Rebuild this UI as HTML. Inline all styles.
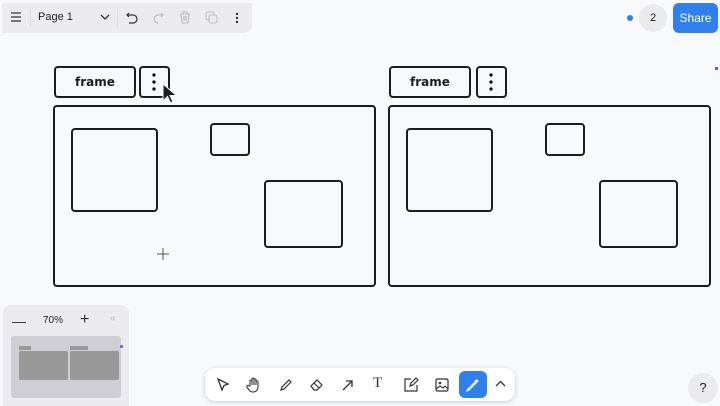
<!DOCTYPE html>
<html><head><style>
body{margin:0;width:720px;height:406px;background:#f8f9fb;font-family:"Liberation Sans",sans-serif;position:relative;overflow:hidden}
.abs{position:absolute}
.b{position:absolute;border:2px solid #1d1d1d;border-radius:4px;box-sizing:border-box}
.lbl{font-family:"Comic Sans MS","DejaVu Sans",sans-serif;font-size:12px;font-weight:bold;display:flex;align-items:center;justify-content:center;color:#1d1d1d}
.ic{position:absolute;top:376px;width:18px;height:18px}
</style></head><body>
<div class="abs" style="left:2px;top:3px;width:250px;height:30px;background:#ececef;border-radius:0 0 8px 0"></div>
<svg class="abs" style="left:10px;top:12px" width="12" height="10"><path d="M1 1h10M1 5h10M1 9h10" stroke="#333" stroke-width="1.3"/></svg>
<div class="abs" style="left:30px;top:9px;width:1px;height:18px;background:#ddd"></div>
<div class="abs" style="left:38px;top:11px;font-size:11px;color:#222">Page 1</div>
<svg class="abs" style="left:100px;top:14px" width="10" height="7"><path d="M1 1l4 4 4-4" stroke="#333" fill="none" stroke-width="1.3"/></svg>
<div class="abs" style="left:117px;top:9px;width:1px;height:18px;background:#ddd"></div>
<svg class="abs" style="left:126px;top:12px" width="12" height="12"><path d="M3 1L1 3l2 2M1 3h6a4 4 0 010 8H3" stroke="#333" fill="none" stroke-width="1.2"/></svg>
<svg class="abs" style="left:152px;top:12px" width="12" height="12"><path d="M9 1l2 2-2 2M11 3H6a4 4 0 000 8" stroke="#bbb" fill="none" stroke-width="1.2"/></svg>
<svg class="abs" style="left:179px;top:11px" width="12" height="13"><path d="M1 3h10M4 3V1h4v2M2 3l1 9h6l1-9M5 5v5M7 5v5" stroke="#bbb" fill="none" stroke-width="1.1"/></svg>
<svg class="abs" style="left:205px;top:11px" width="13" height="13"><rect x="1" y="1" width="8" height="8" rx="2" stroke="#bbb" fill="none"/><rect x="4" y="4" width="8" height="8" rx="2" stroke="#bbb" fill="#ececef"/></svg>
<svg class="abs" style="left:235px;top:12px" width="4" height="12"><circle cx="2" cy="2" r="1.2" fill="#333"/><circle cx="2" cy="6" r="1.2" fill="#333"/><circle cx="2" cy="10" r="1.2" fill="#333"/></svg>

<div class="abs" style="left:627px;top:15px;width:6px;height:6px;border-radius:50%;background:#2f80ed"></div>
<div class="abs" style="left:639px;top:4px;width:28px;height:28px;border-radius:50%;background:#ebebee;font-size:11px;text-align:center;line-height:28px;color:#222">2</div>
<div class="abs" style="left:673px;top:3px;width:45px;height:30px;border-radius:6px;background:#2f80ed;color:#fff;font-size:12px;text-align:center;line-height:30px">Share</div>
<div class="abs" style="left:715px;top:67px;width:3px;height:3px;background:#5a5ae8"></div>

<div class="b lbl" style="left:54px;top:66px;width:82px;height:32px">frame</div>
<div class="b" style="left:139px;top:66px;width:31px;height:32px"></div>
<svg class="abs" style="left:152px;top:72px" width="4" height="20"><circle cx="2" cy="3" r="1.6"/><circle cx="2" cy="10" r="1.6"/><circle cx="2" cy="17" r="1.6"/></svg>
<svg class="abs" style="left:161px;top:83px" width="16" height="22"><path d="M2 1v17l4.5-4.5 3 6.5 2.5-1.2-3-6.3h6.5z" fill="#1d1d1d" stroke="#fff" stroke-width="1"/></svg>
<div class="b" style="left:53px;top:105px;width:323px;height:182px"></div>
<div class="b" style="left:71px;top:128px;width:87px;height:84px"></div>
<div class="b" style="left:210px;top:123px;width:40px;height:33px"></div>
<div class="b" style="left:264px;top:180px;width:79px;height:68px"></div>
<svg class="abs" style="left:157px;top:248px" width="12" height="12"><path d="M6 0v12M0 6h12" stroke="#555" stroke-width="1"/></svg>

<div class="b lbl" style="left:389px;top:66px;width:82px;height:32px">frame</div>
<div class="b" style="left:476px;top:66px;width:31px;height:32px"></div>
<svg class="abs" style="left:489px;top:72px" width="4" height="20"><circle cx="2" cy="3" r="1.6"/><circle cx="2" cy="10" r="1.6"/><circle cx="2" cy="17" r="1.6"/></svg>
<div class="b" style="left:388px;top:105px;width:323px;height:182px"></div>
<div class="b" style="left:406px;top:128px;width:87px;height:84px"></div>
<div class="b" style="left:545px;top:123px;width:40px;height:33px"></div>
<div class="b" style="left:599px;top:180px;width:79px;height:68px"></div>

<div class="abs" style="left:3px;top:305px;width:126px;height:101px;background:#ececef;border-radius:8px 8px 0 0"></div>
<div class="abs" style="left:12px;top:313px;font-size:14px;color:#333">—</div>
<div class="abs" style="left:43px;top:315px;font-size:10px;color:#222">70%</div>
<div class="abs" style="left:80px;top:311px;font-size:16px;color:#333">+</div>
<div class="abs" style="left:110px;top:313px;font-size:10px;color:#bbb">«</div>
<div class="abs" style="left:11px;top:336px;width:110px;height:62px;background:#cfcfd3;border-radius:3px"></div>
<div class="abs" style="left:19px;top:346px;width:12px;height:4px;background:#999"></div>
<div class="abs" style="left:70px;top:346px;width:18px;height:4px;background:#999"></div>
<div class="abs" style="left:19px;top:351px;width:49px;height:29px;background:#999;border-radius:2px"></div>
<div class="abs" style="left:70px;top:351px;width:49px;height:29px;background:#999;border-radius:2px"></div>
<div class="abs" style="left:120px;top:345px;width:3px;height:3px;border-radius:50%;background:#5a5ae8"></div>

<div class="abs" style="left:205px;top:368px;width:310px;height:33px;background:#fff;border-radius:10px;box-shadow:0 1px 4px rgba(0,0,0,.2)"></div>
<svg class="ic" style="left:214px" viewBox="0 0 18 18"><path d="M4 3l10 5-4 1.5L8 14z" fill="none" stroke="#333" stroke-width="1.3"/></svg>
<svg class="ic" style="left:245px" viewBox="0 0 18 18"><path d="M5 10V5a1 1 0 012 0v4V3a1 1 0 012 0v6V4a1 1 0 012 0v5V6a1 1 0 012 0v5c0 3-2 5-5 5s-4-2-6-5a1 1 0 012-1z" fill="none" stroke="#333" stroke-width="1.1"/></svg>
<svg class="ic" style="left:277px" viewBox="0 0 18 18"><path d="M4 14l1-3 7-7 2 2-7 7z" fill="none" stroke="#333" stroke-width="1.2"/></svg>
<svg class="ic" style="left:308px" viewBox="0 0 18 18"><path d="M3 10l6-6 5 5-5 5-3 0z M6 7l5 5" fill="none" stroke="#333" stroke-width="1.2"/></svg>
<svg class="ic" style="left:339px" viewBox="0 0 18 18"><path d="M4 14L13 5M7 5h6v6" fill="none" stroke="#333" stroke-width="1.3"/></svg>
<div class="abs" style="left:373px;top:375px;font-family:'Liberation Serif',serif;font-size:15px;color:#333">T</div>
<svg class="ic" style="left:402px" viewBox="0 0 18 18"><path d="M9 3H3v12h12V9M8 10l1-3 5-5 2 2-5 5z" fill="none" stroke="#333" stroke-width="1.2"/></svg>
<svg class="ic" style="left:433px" viewBox="0 0 18 18"><rect x="3" y="3" width="12" height="12" rx="1.5" fill="none" stroke="#333" stroke-width="1.2"/><circle cx="7" cy="7" r="1.3" fill="#333"/><path d="M3 13l4-3 3 2 2-2 3 3" fill="none" stroke="#333" stroke-width="1.1"/></svg>
<div class="abs" style="left:459px;top:371px;width:28px;height:27px;background:#2f80ed;border-radius:6px"></div>
<svg class="ic" style="left:464px;top:376px" viewBox="0 0 18 18"><path d="M3 15l2-1 9-9-1-1-9 9zM11 4l2 2" fill="none" stroke="#fff" stroke-width="1.2"/></svg>
<svg class="abs" style="left:495px;top:380px" width="11" height="7"><path d="M1 6l4.5-4.5L10 6" stroke="#333" fill="none" stroke-width="1.3"/></svg>

<div class="abs" style="left:688px;top:373px;width:30px;height:30px;border-radius:50%;background:#ebebee;font-size:13px;text-align:center;line-height:30px;color:#222">?</div>
</body></html>
